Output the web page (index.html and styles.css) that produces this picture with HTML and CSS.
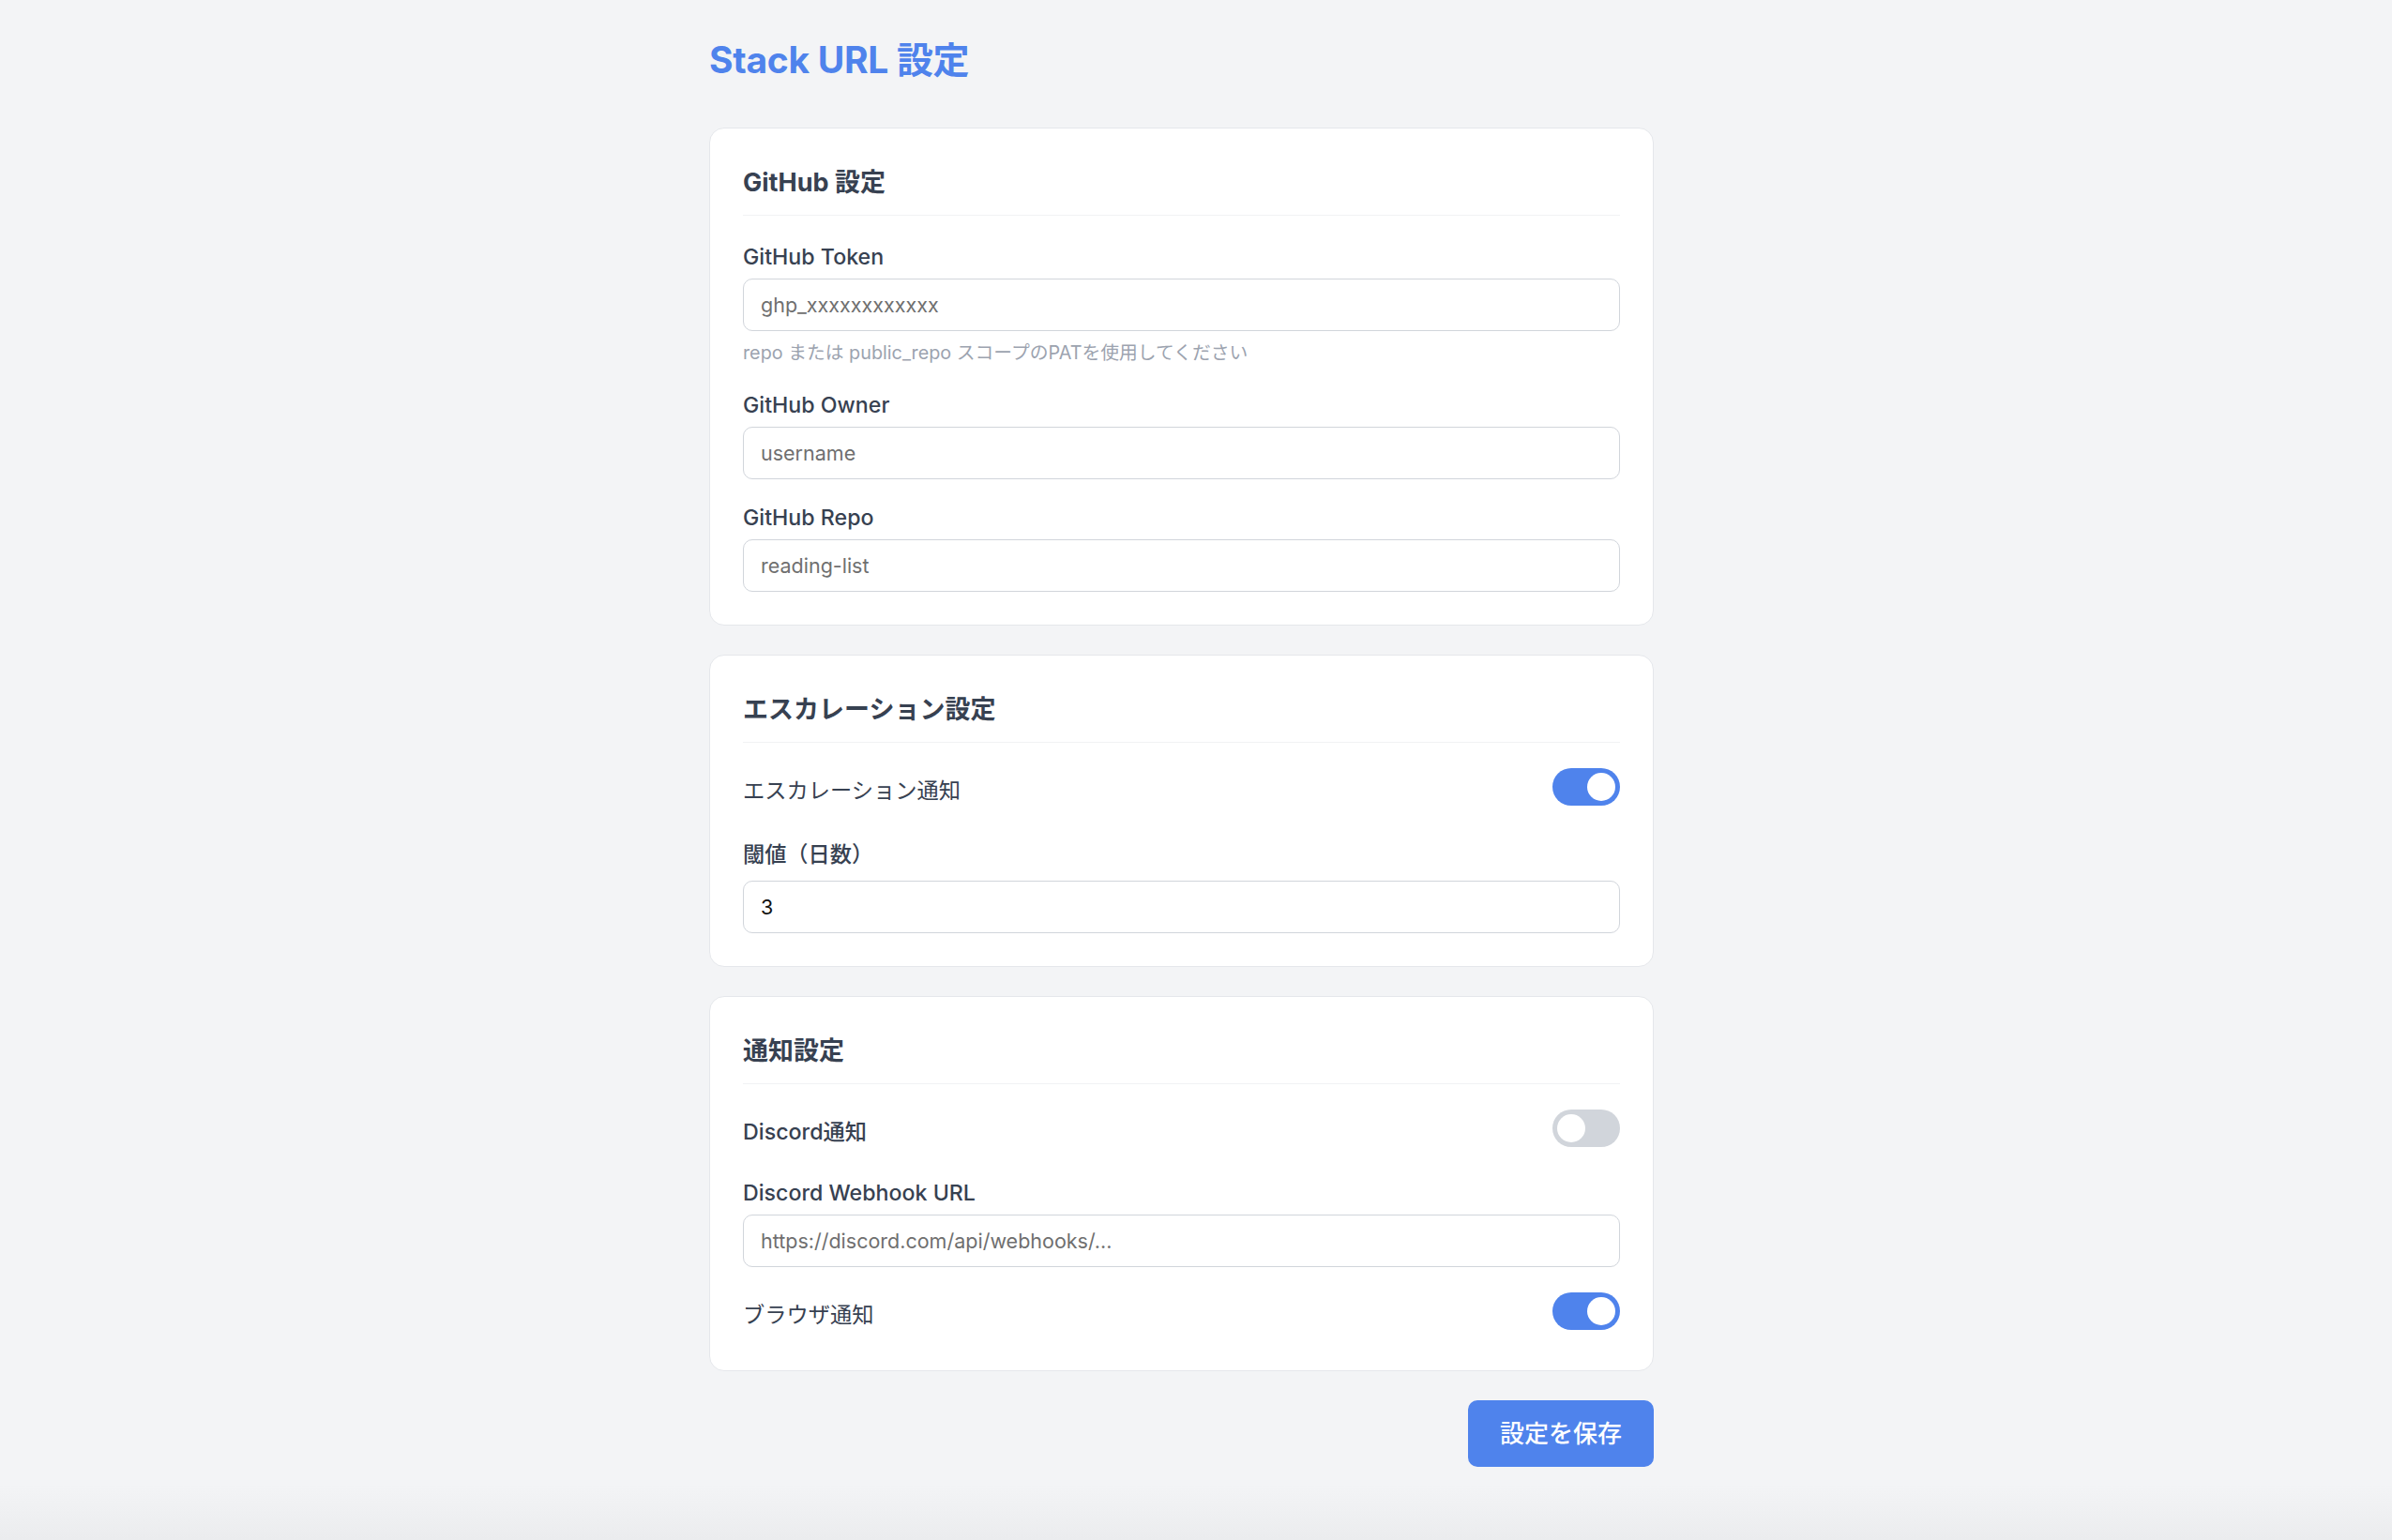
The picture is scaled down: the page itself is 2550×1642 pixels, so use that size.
FILE: index.html
```html
<!DOCTYPE html>
<html lang="ja">
<head>
<meta charset="utf-8">
<title>Stack URL 設定</title>
<link rel="stylesheet" href="styles.css">
</head>
<body>
<main class="page">
  <h1 class="page-title">Stack URL 設定</h1>

  <section class="card">
    <h2 class="card-title">GitHub 設定</h2>
    <div class="form-group">
      <label class="field-label" for="token">GitHub Token</label>
      <input class="text-input" id="token" type="text" placeholder="ghp_xxxxxxxxxxxx">
      <p class="help">repo または public_repo スコープのPATを使用してください</p>
    </div>
    <div class="form-group">
      <label class="field-label" for="owner">GitHub Owner</label>
      <input class="text-input" id="owner" type="text" placeholder="username">
    </div>
    <div class="form-group">
      <label class="field-label" for="repo">GitHub Repo</label>
      <input class="text-input" id="repo" type="text" placeholder="reading-list">
    </div>
  </section>

  <section class="card">
    <h2 class="card-title">エスカレーション設定</h2>
    <div class="toggle-row toggle-row-wide">
      <span class="toggle-text">エスカレーション通知</span>
      <span class="switch is-on"><span class="knob"></span></span>
    </div>
    <div class="form-group">
      <label class="field-label field-label-spaced" for="threshold">閾値（日数）</label>
      <input class="text-input" id="threshold" type="number" value="3">
    </div>
  </section>

  <section class="card">
    <h2 class="card-title">通知設定</h2>
    <div class="toggle-row toggle-row-first">
      <span class="toggle-text toggle-text-medium">Discord通知</span>
      <span class="switch"><span class="knob"></span></span>
    </div>
    <div class="form-group form-group-loose">
      <label class="field-label" for="webhook">Discord Webhook URL</label>
      <input class="text-input" id="webhook" type="text" placeholder="https://discord.com/api/webhooks/...">
    </div>
    <div class="toggle-row">
      <span class="toggle-text">ブラウザ通知</span>
      <span class="switch is-on"><span class="knob"></span></span>
    </div>
  </section>

  <div class="actions">
    <button class="save-btn" type="button">設定を保存</button>
  </div>
</main>
</body>
</html>
```
FILE: styles.css
```css
* { box-sizing: border-box; }

html, body {
  margin: 0;
  padding: 0;
}

body {
  min-height: 100vh;
  background: linear-gradient(to bottom, #f3f4f6 0, #f3f4f6 calc(100% - 60px), #ebecee 100%);
  font-family: Inter, "Noto Sans CJK JP", "Noto Sans", sans-serif;
  color: #374151;
  padding: 41px 31px 0 0;
}

.page {
  width: 1007px;
  margin: 0 auto;
}

.page-title {
  margin: 0 0 48px;
  font-size: 39px;
  line-height: 1.2;
  font-weight: 700;
  color: #4f83ec;
  letter-spacing: -0.3px;
}

.card {
  background: #ffffff;
  border: 1px solid #e5e7eb;
  border-radius: 16px;
  padding: 35px;
  margin-bottom: 31px;
}

.card-title {
  margin: 0 0 27px;
  padding-top: 3px;
  padding-bottom: 14px;
  border-bottom: 1px solid #f1f2f4;
  font-size: 27px;
  line-height: 40px;
  font-weight: 700;
  color: #374151;
}

.form-group {
  margin-bottom: 24px;
}

.form-group-loose {
  margin-bottom: 27px;
}

.form-group:last-child {
  margin-bottom: 0;
}

.field-label {
  display: block;
  margin-bottom: 6px;
  font-size: 23.2px;
  line-height: 34px;
  font-weight: 500;
  color: #374151;
}

.field-label-spaced {
  margin-bottom: 11px;
}

.text-input {
  display: block;
  width: 100%;
  height: 56px;
  padding: 0 18px;
  border: 1px solid #d1d5db;
  border-radius: 10px;
  background: #ffffff;
  font-family: Inter, "Noto Sans CJK JP", sans-serif;
  font-size: 21.5px;
  color: #111111;
  outline: none;
  -moz-appearance: textfield;
}

.text-input::placeholder {
  color: #6f6f6f;
}

.text-input::-webkit-outer-spin-button,
.text-input::-webkit-inner-spin-button {
  -webkit-appearance: none;
  margin: 0;
}

.help {
  margin: 9px 0 0;
  font-size: 19.8px;
  line-height: 29px;
  color: #9ca3af;
}

.toggle-row {
  display: flex;
  align-items: center;
  justify-content: space-between;
  margin-bottom: 24px;
}

.toggle-row-wide {
  margin-bottom: 27px;
}

.toggle-row-first {
  margin-top: 2px;
}

.toggle-row:last-child {
  margin-bottom: 0;
}

.toggle-text {
  font-size: 23.25px;
  line-height: 34px;
  font-weight: 400;
  color: #374151;
}

.toggle-text-medium {
  font-weight: 500;
}

.switch {
  display: flex;
  justify-content: flex-start;
  align-items: center;
  width: 72px;
  height: 40px;
  padding: 5px;
  margin-bottom: 8px;
  border-radius: 20px;
  background: #d1d5db;
}

.switch.is-on {
  justify-content: flex-end;
  background: #4f83ec;
}

.knob {
  width: 30px;
  height: 30px;
  border-radius: 50%;
  background: #ffffff;
}

.actions {
  display: flex;
  justify-content: flex-end;
}

.save-btn {
  padding: 16px 34px;
  border: none;
  border-radius: 10px;
  background: #4f83ec;
  color: #ffffff;
  font-family: Inter, "Noto Sans CJK JP", sans-serif;
  font-size: 26px;
  line-height: 39px;
  font-weight: 500;
  cursor: pointer;
}
```
